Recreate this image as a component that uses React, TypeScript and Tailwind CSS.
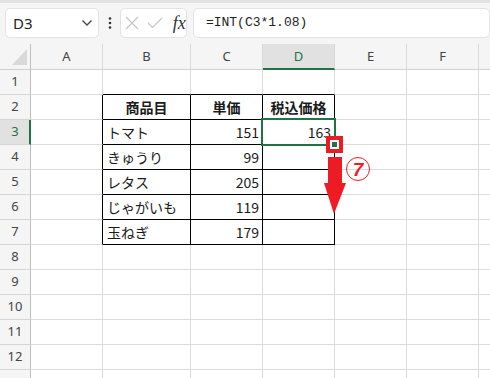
import React from "react";

const cols = ["A", "B", "C", "D", "E", "F", "G"];
const data: Record<number, [string, string, string]> = {
  2: ["商品目", "単価", "税込価格"],
  3: ["トマト", "151", "163"],
  4: ["きゅうり", "99", ""],
  5: ["レタス", "205", ""],
  6: ["じゃがいも", "119", ""],
  7: ["玉ねぎ", "179", ""],
};

function cellClass(r: number, c: number) {
  const inTable = r >= 2 && r <= 7 && c >= 1 && c <= 3;
  const aboveTable = r === 1 && c >= 1 && c <= 3;
  const leftOfTable = r >= 2 && r <= 7 && c === 0;
  if (inTable) return "border-r border-b border-r-black border-b-black";
  if (aboveTable) return "border-r border-b border-r-[#dcdcdc] border-b-black";
  if (leftOfTable) return "border-r border-b border-r-black border-b-[#dcdcdc]";
  return "border-r border-b border-[#dcdcdc]";
}

export default function App() {
  const rows = Array.from({ length: 13 }, (_, i) => i + 1);
  return (
    <div
      className="relative w-[490px] h-[378px] overflow-hidden bg-[#f5f5f5]"
      style={{ fontFamily: '"Noto Sans", "Noto Sans CJK JP", sans-serif' }}
    >
      {/* toolbar */}
      <div className="h-[44px] border-t-[3px] border-[#e2e2e2] pt-[5px] pl-[5px] flex items-start">
        <div className="w-[101px] h-[30px] bg-white border border-[#e3e3e3] rounded-[5px] flex items-center justify-between pl-[7px] pr-[5px]">
          <span className="text-[15px] text-[#222]">D3</span>
          <svg width="12" height="8" viewBox="0 0 12 8">
            <path d="M1.5 1.5 L6 6 L10.5 1.5" fill="none" stroke="#444" strokeWidth="1.3" />
          </svg>
        </div>
        <div className="w-[22px] h-[30px] flex items-center justify-center">
          <svg width="4" height="12" viewBox="0 0 4 12">
            <circle cx="2" cy="1.5" r="1.3" fill="#333" />
            <circle cx="2" cy="6" r="1.3" fill="#333" />
            <circle cx="2" cy="10.5" r="1.3" fill="#333" />
          </svg>
        </div>
        <div className="w-[72px] h-[30px] bg-white border border-[#e3e3e3] rounded-[5px] flex items-center pl-[4px]">
          <svg width="14" height="14" viewBox="0 0 14 14">
            <path d="M1 1 L13 13 M13 1 L1 13" stroke="#c6c6c6" strokeWidth="1.2" fill="none" />
          </svg>
          <svg width="16" height="12" viewBox="0 0 16 12" className="ml-[8px]">
            <path d="M1 6 L5.5 10.5 L15 1" stroke="#c6c6c6" strokeWidth="1.2" fill="none" />
          </svg>
          <span
            className="ml-[10px] text-[18px] italic text-[#333] leading-none"
            style={{ fontFamily: '"Liberation Serif", serif' }}
          >
            fx
          </span>
        </div>
        <div className="ml-[6px] w-[320px] h-[30px] bg-white border border-[#e3e3e3] rounded-[5px] flex items-center pl-[12px]">
          <span
            className="text-[13px] text-[#222]"
            style={{ fontFamily: '"Liberation Mono", monospace' }}
          >
            =INT(C3*1.08)
          </span>
        </div>
      </div>

      {/* grid */}
      <div className="grid grid-cols-[31px_72px_88px_72px_72px_72px_72px_72px] bg-white">
        {/* header row */}
        <div className="h-[26px] bg-[#f5f5f5] border-r border-b border-r-[#bdbdbd] border-b-[#d0d0d0] relative">
          <svg width="16" height="17" viewBox="0 0 16 17" className="absolute left-[12px] top-[5px]">
            <polygon points="15,0 15,16 0,16" fill="#d9d9d9" />
          </svg>
        </div>
        {cols.map((c) =>
          c === "D" ? (
            <div
              key={c}
              className="h-[26px] bg-[#e1e1e1] border-r border-r-[#d6d6d6] border-b-2 border-b-[#217346] flex items-center justify-center text-[13px] text-[#217346] pt-[2px]"
            >
              {c}
            </div>
          ) : (
            <div
              key={c}
              className="h-[26px] bg-[#f5f5f5] border-r border-b border-r-[#d9d9d9] border-b-[#d0d0d0] flex items-center justify-center text-[13px] text-[#444] pt-[1px]"
            >
              {c === "G" ? "" : c}
            </div>
          )
        )}
        {rows.map((r) => (
          <React.Fragment key={r}>
            {r === 3 ? (
              <div className="h-[25px] bg-[#e1e1e1] border-r-2 border-r-[#217346] border-b border-b-[#d6d6d6] flex items-center justify-center text-[13px] text-[#217346] pl-[1px]">
                {r}
              </div>
            ) : (
              <div className="h-[25px] bg-[#f5f5f5] border-r border-b border-r-[#bdbdbd] border-b-[#d6d6d6] flex items-center justify-center text-[13px] text-[#444]">
                {r === 13 ? "" : r}
              </div>
            )}
            {cols.map((_, ci) => {
              const d = data[r];
              let content: React.ReactNode = null;
              if (d && ci >= 1 && ci <= 3) {
                const txt = d[ci - 1];
                if (r === 2) {
                  content = (
                    <div className="w-full text-center font-bold text-[14px] text-[#1a1a1a]">{txt}</div>
                  );
                } else if (ci === 1) {
                  content = <div className="w-full pl-[4px] text-[14px] text-[#1a1a1a]">{txt}</div>;
                } else {
                  content = (
                    <div className="w-full text-right pr-[3px] text-[14px] text-[#1a1a1a]">{txt}</div>
                  );
                }
              }
              return (
                <div
                  key={ci}
                  className={`h-[25px] flex items-center overflow-hidden whitespace-nowrap ${cellClass(r, ci)}`}
                  style={{ fontFamily: '"Noto Sans CJK JP", sans-serif' }}
                >
                  {content}
                </div>
              );
            })}
          </React.Fragment>
        ))}
      </div>

      {/* selection */}
      <div className="absolute left-[261px] top-[118px] w-[75px] h-[28px] border-2 border-[#217346]" />

      {/* fill handle highlight */}
      <div className="absolute left-[326px] top-[136px] w-[17px] h-[17px] bg-[#ed1c24] flex items-center justify-center">
        <div className="w-[9px] h-[9px] bg-white flex items-center justify-center">
          <div className="w-[5px] h-[5px] bg-[#217346]" />
        </div>
      </div>

      {/* arrow */}
      <svg className="absolute left-[322px] top-[155px]" width="26" height="62" viewBox="0 0 26 62">
        <rect x="6" y="2" width="14" height="28" fill="#ed1c24" />
        <polygon points="2,28 24,28 12,59" fill="#ed1c24" />
      </svg>

      {/* circled 7 */}
      <div className="absolute left-[346px] top-[157px] w-[24px] h-[24px] rounded-full border-[1.5px] border-[#ed1c24] flex items-center justify-center">
        <span
          className="text-[19px] font-bold italic text-[#ed1c24] leading-none"
          style={{ fontFamily: '"Liberation Sans", sans-serif' }}
        >
          7
        </span>
      </div>
    </div>
  );
}
